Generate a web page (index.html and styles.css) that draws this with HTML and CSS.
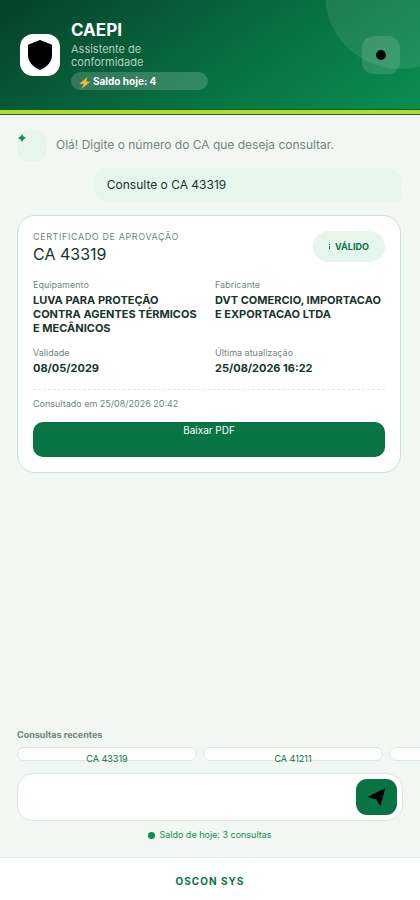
FILE: index.html
```html
<!DOCTYPE html>
<html lang="pt-BR">
<head>
<meta charset="utf-8">
<meta name="viewport" content="width=device-width, initial-scale=1">
<title>CAEPI</title>
<link rel="stylesheet" href="styles.css">
</head>
<body>
<div class="app">
  <header class="header">
    <div class="logo">
      <svg width="24" height="30" viewBox="0 0 24 30" aria-hidden="true"><path d="M12 0 24 4.800V15C24 22 19 27 12 30 5 27 0 22 0 15V4.800Z"/></svg>
    </div>
    <div class="brand">
      <h1>CAEPI</h1>
      <p>Assistente de conformidade</p>
      <div class="balance">
        <svg width="12" height="12" viewBox="0 0 12 12" aria-hidden="true"><path fill="#fdb92c" d="M8.500 0 .5 6.800 4.800 7 2.200 12 11.300 4.800 7 4.600Z"/></svg>
        <span>Saldo hoje: 4</span>
      </div>
    </div>
    <button class="menu" type="button" aria-label="Menu">
      <svg width="10" height="10" viewBox="0 0 10 10" aria-hidden="true"><circle cx="5" cy="5" r="4.900"/></svg>
    </button>
  </header>

  <main class="chat">
    <div class="greeting">
      <div class="avatar">
        <svg width="8" height="8" viewBox="0 0 8 8" aria-hidden="true"><path d="M4 0 5.400 2.600 8 4 5.400 5.400 4 8 2.600 5.400 0 4 2.600 2.600Z"/></svg>
      </div>
      <p>Olá! Digite o número do CA que deseja consultar.</p>
    </div>
    <p class="bubble">Consulte o CA 43319</p>
    <article class="card">
      <div class="card-head">
        <div>
          <p class="eyebrow">CERTIFICADO DE APROVAÇÃO</p>
          <h2>CA 43319</h2>
        </div>
        <span class="status"><svg width="1" height="5" viewBox="0 0 1 5" aria-hidden="true"><path d="M0 0h1v1H0zM0 2h1v3H0z"/></svg>VÁLIDO</span>
      </div>
      <dl class="details">
        <div><dt>Equipamento</dt><dd>LUVA PARA PROTEÇÃO CONTRA AGENTES TÉRMICOS E MECÂNICOS</dd></div>
        <div><dt>Fabricante</dt><dd>DVT COMERCIO, IMPORTACAO E EXPORTACAO LTDA</dd></div>
        <div><dt>Validade</dt><dd>08/05/2029</dd></div>
        <div><dt>Última atualização</dt><dd>25/08/2026 16:22</dd></div>
      </dl>
      <p class="consulted">Consultado em 25/08/2026 20:42</p>
      <button class="download" type="button">Baixar PDF</button>
    </article>
  </main>

  <section class="composer">
    <h3>Consultas recentes</h3>
    <div class="recent">
      <button type="button">CA 43319</button>
      <button type="button">CA 41211</button>
      <button type="button" aria-label="Outra consulta"></button>
    </div>
    <form class="entry">
      <input type="text" aria-label="Número do CA">
      <button type="submit" aria-label="Enviar">
        <svg width="20" height="18" viewBox="0 0 20 18" aria-hidden="true"><path d="M18.500 0 13.300 18 9.300 11.200 .5 9Z"/></svg>
      </button>
    </form>
    <p class="remaining"><span class="dot"></span>Saldo de hoje: 3 consultas</p>
  </section>

  <footer class="footer">OSCON SYS</footer>
</div>
</body>
</html>
```
FILE: styles.css
```css
*, *::before, *::after { box-sizing: border-box; }

body, h1, h2, h3, p, dl, dd { margin: 0; }

body {
  background: #f2f7f4;
  color: #17352a;
  font-family: Inter, "Liberation Sans", sans-serif;
}

button, input { font: inherit; border: 0; padding: 0; }

.app {
  display: flex;
  flex-direction: column;
  min-height: 100vh;
  overflow: hidden;
}

.header {
  position: relative;
  display: flex;
  align-items: center;
  padding: 20px 20px 25px;
  overflow: hidden;
  background: linear-gradient(145deg, #06402b 0%, #087443 60%, #0b8f51 100%);
}

.header::before {
  content: "";
  position: absolute;
  top: -81px;
  right: -55px;
  width: 150px;
  height: 150px;
  border-radius: 50%;
  background: rgba(255, 255, 255, 0.09);
}

.header::after {
  content: "";
  position: absolute;
  left: 0;
  right: 0;
  bottom: 0;
  height: 6px;
  border-top: 1px solid #07613a;
  border-bottom: 1px solid #087443;
  background: #b5d82b;
}

.logo {
  display: flex;
  align-items: center;
  justify-content: center;
  width: 40px;
  height: 42px;
  margin-right: 11px;
  border-radius: 13px;
  background: #fff;
}

.brand { width: 137px; color: #fff; }

.brand h1 { font-size: 17px; line-height: 21px; font-weight: 700; }

.brand p {
  width: 90px;
  margin: 2px 0 3px;
  color: rgba(255, 255, 255, 0.7);
  font-size: 11px;
  line-height: 13px;
}

.balance {
  display: flex;
  align-items: center;
  gap: 2px;
  height: 18px;
  padding: 0 8px;
  border-radius: 9px;
  background: rgba(255, 255, 255, 0.18);
  font-size: 10px;
  line-height: 18px;
  font-weight: 700;
}

.balance svg { margin-top: 3px; }

.menu {
  position: relative;
  display: flex;
  align-items: center;
  justify-content: center;
  width: 38px;
  height: 38px;
  margin-left: auto;
  border-radius: 12px;
  background: rgba(255, 255, 255, 0.13);
}

.chat {
  flex: 1;
  display: flex;
  flex-direction: column;
  padding: 16px 19px 16px 17px;
}

.greeting {
  display: flex;
  gap: 9px;
  color: #71857b;
  font-size: 12px;
  line-height: 28px;
}

.avatar {
  width: 30px;
  height: 30px;
  padding: 3px 1px;
  border-radius: 10px;
  background: #e6f6ec;
  fill: #0b8f51;
}

.avatar svg { display: block; }

.bubble {
  width: 80%;
  margin: 7px 0 13px auto;
  padding: 8px 13px;
  border-radius: 13px 13px 4px 13px;
  background: #e6f6ec;
  font-size: 12px;
  line-height: 18px;
}

.card {
  padding: 15px;
  border: 1px solid #c5e3d1;
  border-radius: 18px;
  background: #fff;
}

.card-head { display: flex; justify-content: space-between; }

.eyebrow {
  color: #71857b;
  font-size: 9px;
  line-height: 11px;
  letter-spacing: 0.6px;
}

.card h2 { font-size: 16px; line-height: 24px; font-weight: 400; }

.status {
  display: flex;
  align-items: center;
  justify-content: center;
  gap: 5px;
  width: 72px;
  height: 31px;
  border-radius: 16px;
  background: #e6f6ec;
  color: #087443;
  font-size: 9px;
  font-weight: 700;
}

.status svg { fill: currentColor; }

.details {
  display: grid;
  grid-template-columns: 1fr 1fr;
  gap: 12px;
  margin-top: 13px;
  padding-bottom: 14px;
  border-bottom: 1px dashed #dfe8e3;
}

.details dt { color: #71857b; font-size: 9px; line-height: 11px; }

.details dd {
  margin-top: 3px;
  font-size: 11px;
  line-height: 14px;
  font-weight: 700;
}

.consulted {
  margin: 8px 0 12px;
  color: #71857b;
  font-size: 9px;
  line-height: 12px;
}

.download {
  display: flex;
  justify-content: center;
  width: 100%;
  height: 35px;
  padding-top: 2px;
  border-radius: 10px;
  background: #087443;
  color: #fff;
  font-size: 10px;
  line-height: 12px;
}

.composer { padding: 0 17px 16px; }

.composer h3 {
  color: #71857b;
  font-size: 9px;
  line-height: 12px;
  font-weight: 700;
}

.recent {
  display: flex;
  gap: 6px;
  margin: 6px -17px 12px 0;
}

.recent button {
  display: flex;
  flex: 0 0 180px;
  justify-content: center;
  height: 14px;
  padding-top: 5px;
  border: 1px solid #dae8e0;
  border-radius: 8px;
  background: #fff;
  color: #087443;
  font-size: 9px;
  line-height: 12px;
}

.entry {
  display: flex;
  align-items: center;
  height: 48px;
  padding: 0 5px;
  border: 1px solid #dae8e0;
  border-radius: 16px;
  background: #fff;
}

.entry input {
  flex: 1;
  min-width: 0;
  height: 36px;
  padding: 0 8px;
  background: transparent;
  outline: 0;
  font-size: 12px;
}

.entry button {
  display: flex;
  align-items: center;
  justify-content: center;
  width: 41px;
  height: 36px;
  border-radius: 11px;
  background: #087443;
}

.remaining {
  display: flex;
  align-items: center;
  justify-content: center;
  gap: 4px;
  margin-top: 8px;
  color: #0b8f51;
  font-size: 9px;
  line-height: 12px;
}

.dot { width: 7px; height: 7px; border-radius: 50%; background: #0b8f51; }

.footer {
  padding: 16px 16px 12px;
  border-top: 1px solid #e3eee8;
  background: #fff;
  color: #087443;
  font-size: 10px;
  line-height: 14px;
  font-weight: 700;
  letter-spacing: 1px;
  text-align: center;
}
```
